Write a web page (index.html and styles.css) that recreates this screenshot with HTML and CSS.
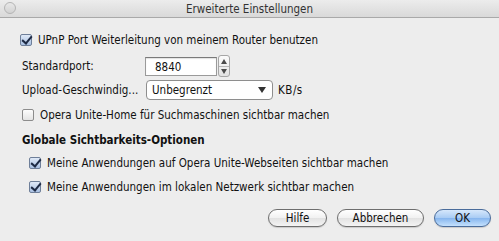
FILE: index.html
```html
<!DOCTYPE html>
<html lang="de">
<head>
    <meta charset="UTF-8">
    <title>Erweiterte Einstellungen</title>
    <link rel="stylesheet" href="styles.css">
</head>
<body>
    <div class="window">
        <div class="titlebar">
            <span class="close-btn"></span>
            <span class="title">Erweiterte Einstellungen</span>
        </div>

        <div class="content">
            <label class="check-row">
                <span class="check checked"></span>
                UPnP Port Weiterleitung von meinem Router benutzen
            </label>

            <div class="field-row port-row">
                <span class="field-label">Standardport:</span>
                <span class="text-input">8840</span>
                <span class="stepper">
                    <span class="step up"></span>
                    <span class="step down"></span>
                </span>
            </div>

            <div class="field-row speed-row">
                <span class="field-label">Upload-Geschwindig...</span>
                <span class="select">
                    <span>Unbegrenzt</span>
                    <span class="arrow"></span>
                </span>
                <span class="unit">KB/s</span>
            </div>

            <label class="check-row home-row">
                <span class="check"></span>
                Opera Unite-Home für Suchmaschinen sichtbar machen
            </label>

            <h2 class="section-title">Globale Sichtbarkeits-Optionen</h2>

            <div class="section">
                <label class="check-row">
                    <span class="check checked"></span>
                    Meine Anwendungen auf Opera Unite-Webseiten sichtbar machen
                </label>
                <label class="check-row">
                    <span class="check checked"></span>
                    Meine Anwendungen im lokalen Netzwerk sichtbar machen
                </label>
            </div>

            <div class="button-group">
                <button class="btn btn-help">Hilfe</button>
                <button class="btn btn-cancel">Abbrechen</button>
                <button class="btn btn-default">OK</button>
            </div>
        </div>
    </div>
</body>
</html>
```

FILE: styles.css
```css
* {
    margin: 0;
    padding: 0;
    box-sizing: border-box;
}

body {
    font-family: "DejaVu Sans Condensed", "DejaVu Sans", sans-serif;
    font-size: 11.5px;
    color: #111;
    background: #ededed;
    width: 499px;
    height: 241px;
    overflow: hidden;
}

.window {
    display: flex;
    flex-direction: column;
    height: 241px;
}

.titlebar {
    position: relative;
    height: 18px;
    background: linear-gradient(#ececec 0%, #d9d9d9 100%);
    border-bottom: 1px solid #a9a9a9;
    display: flex;
    align-items: center;
    justify-content: center;
}

.close-btn {
    position: absolute;
    left: 4px;
    top: 2px;
    width: 12px;
    height: 12px;
    border-radius: 50%;
    border: 1px solid #b4b4b4;
    background: linear-gradient(#e8e8e8, #d2d2d2);
}

.title {
    font-size: 11.5px;
    color: #333;
}

.content {
    flex: 1;
    padding: 15px 8px 0 20px;
    display: flex;
    flex-direction: column;
    white-space: nowrap;
}

.check-row {
    display: flex;
    align-items: center;
    gap: 6px;
    height: 14px;
}

.check {
    width: 12px;
    height: 12px;
    border: 1px solid #8c8c8c;
    border-radius: 2px;
    background: linear-gradient(#fdfdfd, #e4e4e4);
    position: relative;
    flex: none;
}

.check.checked {
    background: linear-gradient(#dfe9f7, #a9c0e2);
    border-color: #6e7f99;
}

.check.checked::after {
    content: "";
    position: absolute;
    left: 3px;
    top: -1px;
    width: 4px;
    height: 8px;
    border-right: 2px solid #1d2a44;
    border-bottom: 2px solid #1d2a44;
    transform: rotate(40deg);
}

.field-row {
    display: flex;
    align-items: center;
    padding-left: 2px;
}

.field-label {
    width: 123px;
}

.port-row {
    margin-top: 8px;
    height: 22px;
}

.text-input {
    width: 72px;
    height: 19px;
    background: #fff;
    border: 1px solid #9a9a9a;
    border-top-color: #7a7a7a;
    padding: 2px 0 0 9px;
    box-shadow: inset 0 1px 1px rgba(0, 0, 0, 0.12);
}

.stepper {
    margin-left: 1px;
    width: 12px;
    height: 22px;
    display: flex;
    flex-direction: column;
    border: 1px solid #a6a6a6;
    border-radius: 3px;
    background: linear-gradient(#fbfbfb, #e2e2e2);
}

.step {
    flex: 1;
    position: relative;
}

.step.up {
    border-bottom: 1px solid #b8b8b8;
}

.step::after {
    content: "";
    position: absolute;
    left: 2px;
    border-left: 3px solid transparent;
    border-right: 3px solid transparent;
}

.step.up::after {
    top: 3px;
    border-bottom: 5px solid #4a4a4a;
}

.step.down::after {
    top: 2px;
    border-top: 5px solid #4a4a4a;
}

.speed-row {
    margin-top: 2px;
    height: 22px;
}

.select {
    width: 127px;
    height: 20px;
    border: 1px solid #8e8e8e;
    border-radius: 4px;
    background: #fff;
    display: flex;
    align-items: center;
    justify-content: space-between;
    padding: 0 6px 0 5px;
    margin-left: 1px;
}

.arrow {
    border-left: 4px solid transparent;
    border-right: 4px solid transparent;
    border-top: 6px solid #333;
}

.unit {
    margin-left: 5px;
    letter-spacing: 0.5px;
}

.home-row {
    margin-top: 7px;
    padding-left: 2px;
}

.section-title {
    font-size: 11.5px;
    font-weight: bold;
    margin-top: 11px;
    padding-left: 2px;
    height: 16px;
}

.section {
    margin-top: 7px;
    padding-left: 9px;
    display: flex;
    flex-direction: column;
    gap: 10px;
}

.button-group {
    display: flex;
    justify-content: flex-end;
    gap: 10px;
    margin-top: 15px;
}

.btn {
    font-family: inherit;
    font-size: 11.5px;
    color: #111;
    height: 18px;
    border: 1px solid #6e6e6e;
    border-radius: 9px;
    background: linear-gradient(#ffffff 0%, #f1f1f1 50%, #e2e2e2 51%, #f4f4f4 100%);
    box-shadow: 0 1px 1px rgba(0, 0, 0, 0.15);
}

.btn-help {
    width: 59px;
}

.btn-cancel {
    width: 87px;
}

.btn-default {
    width: 57px;
    border-color: #4a6c9b;
    background: linear-gradient(#d6e7fb 0%, #a8cbf4 50%, #86b5ee 51%, #c4e1fd 100%);
}
```
